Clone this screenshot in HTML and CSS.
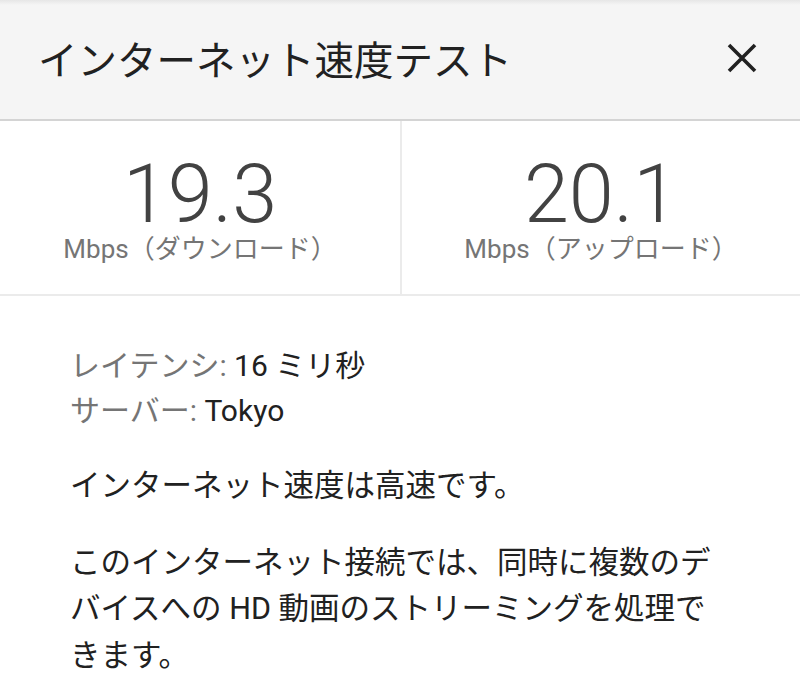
FILE: index.html
```html
<!DOCTYPE html>
<html lang="ja">
<head>
<meta charset="utf-8">
<link rel="stylesheet" href="styles.css">
</head>
<body>
<div class="page">
  <header class="bar">
    <h1 class="title">インターネット速度テスト</h1>
    <button class="close" aria-label="閉じる">
      <svg width="32" height="32" viewBox="0 0 32 32"><path d="M3 3 L29 29 M29 3 L3 29" stroke="#212121" stroke-width="3.6" fill="none"/></svg>
    </button>
  </header>
  <section class="stats">
    <div class="stat">
      <div class="num">19.3</div>
      <div class="unit">Mbps（ダウンロード）</div>
    </div>
    <div class="stat">
      <div class="num">20.1</div>
      <div class="unit">Mbps（アップロード）</div>
    </div>
  </section>
  <section class="details">
    <div class="meta">
      <div><span class="key">レイテンシ:</span> 16 ミリ秒</div>
      <div><span class="key">サーバー:</span> Tokyo</div>
    </div>
    <p class="msg">インターネット速度は高速です。</p>
    <p class="msg desc">このインターネット接続では、同時に複数のデバイスへの HD 動画のストリーミングを処理できます。</p>
  </section>
</div>
</body>
</html>
```
FILE: styles.css
```css
html, body {
  margin: 0;
  padding: 0;
  background: #ffffff;
}
body {
  font-family: Roboto, "Noto Sans CJK JP", sans-serif;
  color: #212121;
  width: 800px;
  height: 689px;
  overflow: hidden;
}
.page {
  display: flex;
  flex-direction: column;
}
.bar {
  height: 121px;
  box-sizing: border-box;
  background: linear-gradient(to bottom, #e6e6e6 0px, #f5f5f5 5px, #f5f5f5 100%);
  border-bottom: 2px solid #d4d4d4;
  display: flex;
  align-items: center;
  justify-content: space-between;
  padding: 0 42px 4px 38px;
}
.title {
  margin: 0;
  font-family: "Noto Sans CJK JP", sans-serif;
  font-weight: 400;
  font-size: 39.5px;
  line-height: 50px;
  color: #212121;
}
.close {
  border: 0;
  background: transparent;
  padding: 0;
  width: 32px;
  height: 32px;
  display: flex;
}
.stats {
  display: grid;
  grid-template-columns: 1fr 1fr;
  border-bottom: 2px solid #ebebeb;
}
.stat {
  display: flex;
  flex-direction: column;
  align-items: center;
  padding: 44px 0 28px;
}
.stat + .stat {
  border-left: 2px solid #ebebeb;
}
.num {
  font-family: Roboto, sans-serif;
  font-weight: 300;
  font-size: 81px;
  line-height: 60px;
  color: #424242;
}
.unit {
  margin-top: 7px;
  font-size: 26px;
  line-height: 34px;
  color: #757575;
}
.details {
  padding: 47px 75px 0 70px;
}
.meta {
  font-size: 30px;
  line-height: 45px;
}
.key {
  color: #757575;
}
.msg {
  margin: 30px 0 0;
  font-size: 30.5px;
  line-height: 46.5px;
}
.desc {
  margin-top: 30px;
}
```
